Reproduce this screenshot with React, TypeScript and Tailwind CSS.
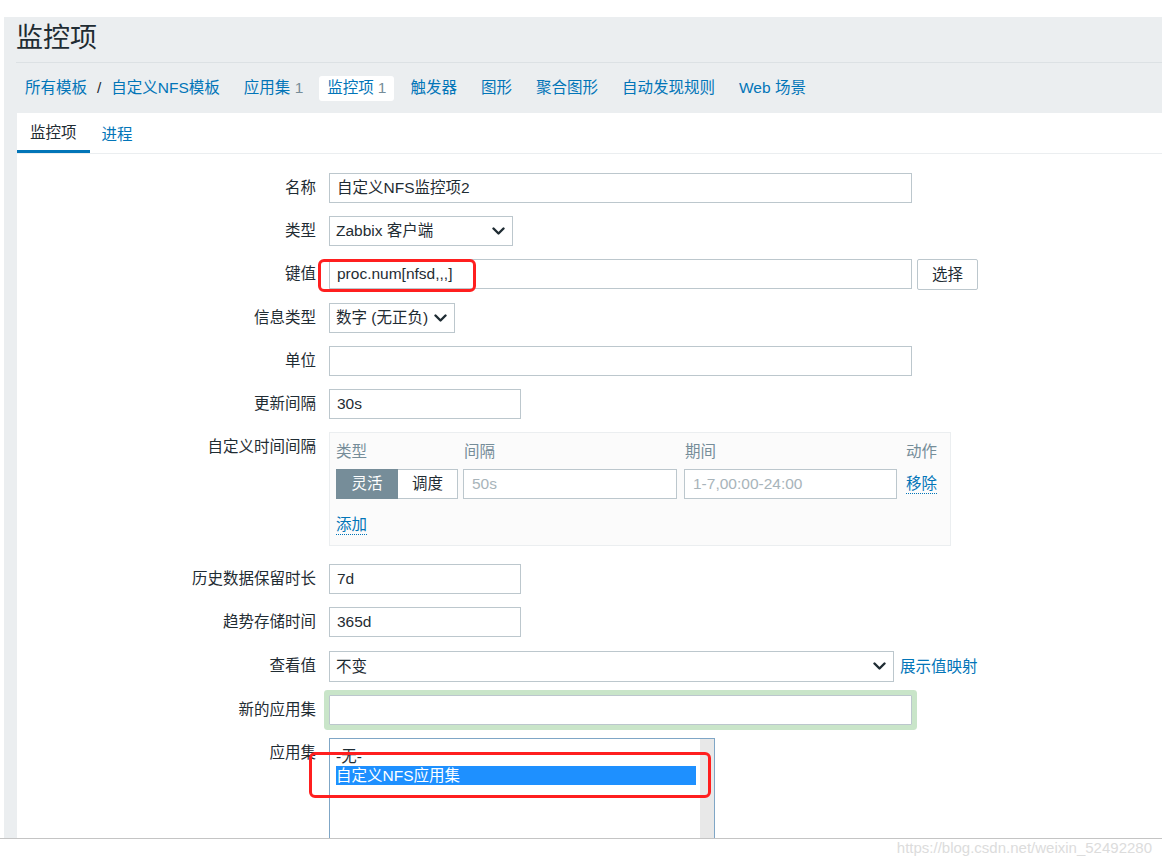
import React from "react";

function Chevron() {
  return (
    <svg width="13" height="9" viewBox="0 0 13 9" className="shrink-0">
      <polyline points="1.5,1.5 6.5,6.5 11.5,1.5" fill="none" stroke="#1f2c33" strokeWidth="2.4" strokeLinecap="round" strokeLinejoin="round" />
    </svg>
  );
}

function Row({ label, children, className }: { label: string; children: React.ReactNode; className?: string }) {
  return (
    <div className={`flex ${className ?? ""}`}>
      <div className="w-[299px] shrink-0 text-right leading-[30px] text-[#1f2c33]">{label}</div>
      <div className="ml-[13px] flex items-start">{children}</div>
    </div>
  );
}

export default function App() {
  return (
    <div className="relative w-[1162px] h-[864px] bg-white overflow-hidden font-[Liberation_Sans,Noto_Sans_CJK_SC,sans-serif] text-[15.5px] text-[#1f2c33]">
      <div className="h-[17px]" />
      <div className="ml-[4px] h-[821px] bg-[#ebeef0] flex flex-col overflow-hidden">
        {/* title */}
        <div className="ml-[12px] h-[46px] shrink-0 border-b border-[#dce1e4] flex items-center">
          <h1 className="text-[27px] leading-none text-[#1f2c33] pb-[2px]">监控项</h1>
        </div>
        {/* breadcrumbs */}
        <nav className="h-[50px] shrink-0 flex items-center pl-[13px] gap-[8px] text-[#0275b8]">
          <div className="px-[8px] flex items-center">
            <span>所有模板</span>
            <span className="mx-[10px] text-[#1f2c33]">/</span>
            <span>自定义NFS模板</span>
          </div>
          <div className="px-[8px]">
            应用集 <span className="text-[#768d99]">1</span>
          </div>
          <div className="px-[8px] h-[25px] flex items-center bg-white rounded-[3px]">
            监控项 <span className="ml-[4px] text-[#768d99]">1</span>
          </div>
          <div className="px-[8px]">触发器</div>
          <div className="px-[8px]">图形</div>
          <div className="px-[8px]">聚合图形</div>
          <div className="px-[8px]">自动发现规则</div>
          <div className="px-[8px]">Web 场景</div>
        </nav>
        {/* content panel */}
        <div className="ml-[13px] flex-1 bg-white flex flex-col min-h-0">
          <div className="h-[41px] shrink-0 flex border-b border-[#ebeef0]">
            <div className="px-[13px] h-[40px] flex items-center border-b-[3px] border-[#0275b8] text-[#1f2c33] pt-[3px]">监控项</div>
            <div className="px-[12px] h-[40px] flex items-center text-[#0275b8] pt-[3px]">进程</div>
          </div>

          <div className="pt-[19px] flex flex-col">
            <Row label="名称">
              <div className="w-[583px] h-[30px] border border-[#bcc7cd] bg-white px-[7px] flex items-center">自定义NFS监控项2</div>
            </Row>
            <Row label="类型" className="mt-[13px]">
              <div className="w-[184px] h-[30px] border border-[#bcc7cd] bg-white pl-[6px] pr-[7px] flex items-center justify-between">
                <span>Zabbix 客户端</span>
                <Chevron />
              </div>
            </Row>
            <Row label="键值" className="mt-[13px]">
              <div className="w-[583px] h-[30px] border border-[#bcc7cd] bg-white px-[7px] flex items-center">proc.num[nfsd,,,]</div>
              <div className="ml-[5px] w-[61px] h-[31px] border border-[#bcc7cd] rounded-[2px] bg-white flex items-center justify-center">选择</div>
            </Row>
            <Row label="信息类型" className="mt-[13px]">
              <div className="w-[126px] h-[30px] border border-[#bcc7cd] bg-white pl-[6px] pr-[7px] flex items-center justify-between">
                <span>数字 (无正负)</span>
                <Chevron />
              </div>
            </Row>
            <Row label="单位" className="mt-[13px]">
              <div className="w-[583px] h-[30px] border border-[#bcc7cd] bg-white" />
            </Row>
            <Row label="更新间隔" className="mt-[13px]">
              <div className="w-[192px] h-[30px] border border-[#bcc7cd] bg-white px-[7px] flex items-center">30s</div>
            </Row>
            <Row label="自定义时间间隔" className="mt-[13px]">
              <div className="w-[622px] h-[114px] border border-[#ebeef0] bg-[#fbfbfb] pt-[10px] pl-[6px]">
                <div className="grid grid-cols-[127px_221px_222px_auto] leading-[18px] text-[#768d99]">
                  <div>类型</div>
                  <div className="pl-[1px]">间隔</div>
                  <div className="pl-[1px]">期间</div>
                  <div>动作</div>
                </div>
                <div className="mt-[8px] grid grid-cols-[127px_221px_222px_auto] items-center">
                  <div className="flex h-[30px] w-[122px]">
                    <div className="w-[62px] h-[30px] bg-[#768d99] text-white flex items-center justify-center border border-[#768d99]">灵活</div>
                    <div className="w-[60px] h-[30px] bg-white border border-l-0 border-[#bcc7cd] flex items-center justify-center">调度</div>
                  </div>
                  <div className="w-[214px] h-[30px] border border-[#bcc7cd] bg-white px-[8px] flex items-center text-[#a8b4ba]">50s</div>
                  <div className="w-[213px] h-[30px] border border-[#bcc7cd] bg-white px-[8px] flex items-center text-[#a8b4ba]">1-7,00:00-24:00</div>
                  <div>
                    <span className="text-[#0275b8] border-b border-dotted border-[#0275b8] leading-[18px] inline-block">移除</span>
                  </div>
                </div>
                <div className="mt-[14px]">
                  <span className="text-[#0275b8] border-b border-dotted border-[#0275b8] leading-[18px] inline-block">添加</span>
                </div>
              </div>
            </Row>
            <Row label="历史数据保留时长" className="mt-[18px]">
              <div className="w-[192px] h-[30px] border border-[#bcc7cd] bg-white px-[7px] flex items-center">7d</div>
            </Row>
            <Row label="趋势存储时间" className="mt-[13px]">
              <div className="w-[192px] h-[30px] border border-[#bcc7cd] bg-white px-[7px] flex items-center">365d</div>
            </Row>
            <Row label="查看值" className="mt-[14px]">
              <div className="w-[565px] h-[31px] border border-[#bcc7cd] bg-white pl-[6px] pr-[7px] flex items-center justify-between">
                <span>不变</span>
                <Chevron />
              </div>
              <div className="ml-[6px] leading-[31px] text-[#0275b8]">展示值映射</div>
            </Row>
            <Row label="新的应用集" className="mt-[13px]">
              <div className="w-[583px] h-[30px] border border-[#bcc7cd] bg-white rounded-[1px] shadow-[0_0_0_5px_#c9e5c9]" />
            </Row>
            <Row label="应用集" className="mt-[13px]">
              <div className="w-[386px] h-[130px] border border-[#7fa6c6] bg-white flex">
                <div className="flex-1 pl-[6px] pr-[4px] pt-[8px] leading-[19px]">
                  <div>-无-</div>
                  <div className="bg-[#1e90ff] text-white">自定义NFS应用集</div>
                </div>
                <div className="w-[14px] bg-[#e8e8e8]" />
              </div>
            </Row>
          </div>
        </div>
      </div>
      <div className="h-px bg-[#c4c4c4]" />
      <div className="flex justify-end pr-[10px] leading-[17px] text-[15px] text-[#dcdcdc]">
        https://blog.csdn.net/weixin_52492280
      </div>

      {/* annotation overlays */}
      <div className="absolute left-[318px] top-[259px] w-[158px] h-[33px] border-[3px] border-[#ff1f1f] rounded-[6px]" />
      <div className="absolute left-[309px] top-[752px] w-[402px] h-[46px] border-[3px] border-[#ff1f1f] rounded-[6px]" />
    </div>
  );
}
